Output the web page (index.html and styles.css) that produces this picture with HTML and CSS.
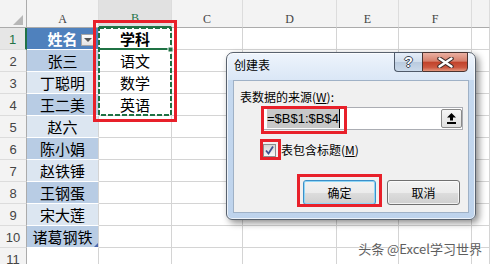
FILE: index.html
```html
<!DOCTYPE html>
<html lang="zh-CN">
<head>
    <meta charset="UTF-8">
    <title>创建表</title>
    <link rel="stylesheet" href="styles.css">
</head>
<body>
    <div class="sheet">
        <div class="hd corner"><span class="tri"></span></div>
        <div class="hd">A</div>
        <div class="hd sel">B</div>
        <div class="hd">C</div>
        <div class="hd">D</div>
        <div class="hd">E</div>
        <div class="hd">F</div>
        <div class="hd"></div>

        <div class="rh sel">1</div>
        <div class="a th">姓名<span class="filter"><i></i></span></div>
        <div class="b bold">学科</div>
        <div></div><div></div><div></div><div></div><div></div>

        <div class="rh">2</div>
        <div class="a even">张三</div>
        <div class="b">语文</div>
        <div></div><div></div><div></div><div></div><div></div>

        <div class="rh">3</div>
        <div class="a odd">丁聪明</div>
        <div class="b">数学</div>
        <div></div><div></div><div></div><div></div><div></div>

        <div class="rh">4</div>
        <div class="a even">王二美</div>
        <div class="b">英语</div>
        <div></div><div></div><div></div><div></div><div></div>

        <div class="rh">5</div>
        <div class="a odd">赵六</div>
        <div></div><div></div><div></div><div></div><div></div><div></div>

        <div class="rh">6</div>
        <div class="a even">陈小娟</div>
        <div></div><div></div><div></div><div></div><div></div><div></div>

        <div class="rh">7</div>
        <div class="a odd">赵铁锤</div>
        <div></div><div></div><div></div><div></div><div></div><div></div>

        <div class="rh">8</div>
        <div class="a even">王钢蛋</div>
        <div></div><div></div><div></div><div></div><div></div><div></div>

        <div class="rh">9</div>
        <div class="a odd">宋大莲</div>
        <div></div><div></div><div></div><div></div><div></div><div></div>

        <div class="rh">10</div>
        <div class="a even last">诸葛钢铁<span class="resize"></span></div>
        <div></div><div></div><div></div><div></div><div></div><div></div>

        <div class="rh">11</div>
        <div></div><div></div><div></div><div></div><div></div><div></div><div></div>
    </div>

    <!-- copy range B1:B4 -->
    <svg class="ants" width="80" height="92" viewBox="0 0 80 92">
        <rect x="1" y="1" width="72" height="87" fill="none" stroke="#1f7244" stroke-width="2" stroke-dasharray="5 2"/>
        <line x1="1" y1="22" x2="72" y2="22" stroke="#1f7244" stroke-width="2"/>
        <rect x="70" y="20" width="5" height="5" fill="#1f7244" stroke="#fff" stroke-width="1"/>
    </svg>

    <div class="dlg">
        <div class="titlebar">
            <span class="title">创建表</span>
            <div class="caption-btns">
                <span class="help">?</span>
                <span class="close">
                    <svg width="17" height="11" viewBox="0 0 17 11">
                        <path d="M2.5 1.5 L14.5 9.5 M14.5 1.5 L2.5 9.5" stroke="#3b2a28" stroke-width="4.4" stroke-linecap="round"/>
                        <path d="M2.5 1.5 L14.5 9.5 M14.5 1.5 L2.5 9.5" stroke="#fff" stroke-width="2.4" stroke-linecap="round"/>
                    </svg>
                </span>
            </div>
        </div>
        <div class="client">
            <div class="label">表数据的来源(<u>W</u>):</div>
            <div class="refedit">
                <span class="selected">=$B$1:$B$4</span>
                <span class="collapse">
                    <svg width="9" height="11" viewBox="0 0 9 11">
                        <polygon points="4.5,0 9,4.5 6,4.5 6,7.5 3,7.5 3,4.5 0,4.5" fill="#000"/>
                        <rect x="0" y="9" width="9" height="2" fill="#000"/>
                    </svg>
                </span>
            </div>
            <div class="check-row">
                <span class="checkbox">
                    <svg width="11" height="11" viewBox="0 0 11 11">
                        <path d="M2 5.5 L4.5 8.5 L9 1.5" fill="none" stroke="#3d5291" stroke-width="1.8"/>
                    </svg>
                </span>
                <span class="label">表包含标题(<u>M</u>)</span>
            </div>
            <div class="btn-row">
                <span class="button default">确定</span>
                <span class="button">取消</span>
            </div>
        </div>
    </div>

    <div class="mark mark-range"></div>
    <div class="mark mark-input"></div>
    <div class="mark mark-check"></div>
    <div class="mark mark-ok"></div>

    <div class="watermark">头条 @Excel学习世界</div>
</body>
</html>
```

FILE: styles.css
```css
* {
    box-sizing: border-box;
}
body {
    margin: 0;
    width: 490px;
    height: 264px;
    overflow: hidden;
    position: relative;
    background: #fff;
    font-family: "Noto Sans CJK SC", sans-serif;
}

/* worksheet grid */
.sheet {
    display: grid;
    grid-template-columns: 27px 72px 73px 71px 94px 62px 73px 1fr;
    grid-template-rows: 28px repeat(11, 22px);
}
.sheet > div {
    position: relative;
    display: flex;
    align-items: center;
    justify-content: center;
    border-right: 1px solid #d4d4d4;
    border-bottom: 1px solid #d4d4d4;
    font-size: 15px;
    line-height: 18px;
    color: #000;
}
.sheet .hd {
    align-items: flex-end;
    padding-bottom: 2px;
    background: #f3f3f3;
    border-right-color: #dcdcdc;
    border-bottom-color: #ababab;
    font-family: "Liberation Serif", serif;
    font-size: 12px;
    line-height: 12px;
    color: #444;
}
.sheet .hd.sel {
    background: #e1e1e1;
    color: #217346;
    border-bottom: 2px solid #217346;
}
.sheet .corner {
    justify-content: flex-end;
    padding: 0 3px 2px 0;
    border-right-color: #ababab;
}
.tri {
    width: 0;
    height: 0;
    border-left: 10px solid transparent;
    border-bottom: 10px solid #b7b7b7;
}
.sheet .rh {
    padding-top: 3px;
    background: #f3f3f3;
    border-right-color: #ababab;
    border-bottom-color: #dcdcdc;
    font-family: "Liberation Sans", sans-serif;
    font-size: 13px;
    color: #444;
}
.sheet .rh.sel {
    background: #e6e6e6;
    color: #217346;
    border-right: 2px solid #217346;
}
.sheet .a {
    border-bottom-color: #fff;
}
.sheet .a.th {
    background: #4f81bd;
    color: #fff;
    font-weight: bold;
}
.sheet .a.even {
    background: #b8cce4;
}
.sheet .a.odd {
    background: #dce6f1;
}
.sheet .bold {
    font-weight: bold;
}
.filter {
    position: absolute;
    right: 4px;
    top: 6px;
    width: 13px;
    height: 12px;
    border: 1px solid #a6a6a6;
    background: linear-gradient(#fbfbfb, #e4e4e4);
    display: flex;
    align-items: center;
    justify-content: center;
}
.filter i {
    width: 0;
    height: 0;
    border-left: 4px solid transparent;
    border-right: 4px solid transparent;
    border-top: 4px solid #555;
}
.resize {
    position: absolute;
    right: 0;
    bottom: 0;
    width: 0;
    height: 0;
    border-left: 4px solid transparent;
    border-bottom: 4px solid #4a66ad;
}
.ants {
    position: absolute;
    left: 98px;
    top: 27px;
    overflow: visible;
}

/* dialog */
.dlg {
    position: absolute;
    left: 226px;
    top: 52px;
    width: 250px;
    height: 168px;
    display: flex;
    flex-direction: column;
    padding: 0 6px 6px 6px;
    border: 1px solid #59626e;
    border-radius: 7px 7px 6px 6px;
    background: linear-gradient(#eef4fc 0, #dae7f6 27px, #c6d9ef 27px, #bed3ec 100%);
    box-shadow: 3px 3px 7px rgba(0,0,0,0.45), inset 0 0 0 1px rgba(255,255,255,0.7);
}
.titlebar {
    height: 27px;
    display: flex;
    align-items: flex-start;
}
.title {
    margin-top: 4px;
    margin-left: 1px;
    font-size: 12px;
    line-height: 16px;
    color: #000;
}
.caption-btns {
    display: flex;
    margin-left: auto;
    margin-right: 1px;
    margin-top: -1px;
}
.help {
    width: 28px;
    height: 20px;
    border: 1px solid #4f5a6a;
    border-right: none;
    border-radius: 0 0 0 4px;
    background: linear-gradient(#e6eef8 0%, #d0ddec 50%, #b9cade 50%, #cad9ea 100%);
    font-family: "Liberation Sans", sans-serif;
    font-weight: bold;
    font-size: 14px;
    line-height: 18px;
    text-align: center;
    color: #fff;
    text-shadow: 1px 0 0 #3c4654, -1px 0 0 #3c4654, 0 1px 0 #3c4654, 0 -1px 0 #3c4654;
}
.close {
    width: 46px;
    height: 20px;
    display: flex;
    align-items: center;
    justify-content: center;
    border: 1px solid #4a3431;
    border-radius: 0 0 4px 0;
    background: linear-gradient(#eab0a2 0%, #d6806c 45%, #c2432b 52%, #cc5840 80%, #e3967d 100%);
}
.client {
    flex: 1;
    background: #f0f0f0;
    border: 1px solid #9fb1c6;
    font-size: 12px;
    line-height: 14px;
    color: #000;
}
.client .label {
    margin: 9px 0 0 6px;
}
.client u {
    text-decoration-thickness: 1px;
    text-underline-offset: 1px;
}
.refedit {
    display: flex;
    align-items: center;
    width: 201px;
    height: 23px;
    margin: 3px 0 0 28px;
    padding-left: 4px;
    border: 1px solid #abadb3;
    background: #fff;
}
.selected {
    background: #c8c8c8;
    border-right: 1px solid #000;
    font-family: "Liberation Sans", sans-serif;
    font-size: 13px;
    line-height: 19px;
}
.collapse {
    margin-left: auto;
    margin-right: 0;
    width: 21px;
    height: 19px;
    display: flex;
    align-items: center;
    justify-content: center;
    border: 1px solid #8a8a8a;
    border-radius: 2px;
    background: linear-gradient(#f6f6f6, #e0e0e0);
}
.check-row {
    display: flex;
    align-items: center;
    margin: 13px 0 0 29px;
}
.check-row .label {
    margin: 0 0 0 5px;
}
.checkbox {
    width: 13px;
    height: 13px;
    display: flex;
    align-items: center;
    justify-content: center;
    border: 1px solid #8e8f8f;
    background: linear-gradient(#d6d6d6, #f8f8f8);
}
.btn-row {
    display: flex;
    gap: 11px;
    margin: 23px 0 0 69px;
}
.button {
    width: 73px;
    height: 25px;
    display: flex;
    align-items: center;
    justify-content: center;
    border: 1px solid #707070;
    border-radius: 3px;
    background: linear-gradient(#f2f2f2 0%, #ebebeb 50%, #dddddd 50%, #cfcfcf 100%);
    box-shadow: inset 0 0 0 1px rgba(255,255,255,0.7);
}
.button.default {
    border-color: #3c8fc8;
    box-shadow: inset 0 0 0 1px #8fd6f6;
}

/* red highlight boxes */
.mark {
    position: absolute;
    border: 3px solid #e8202a;
}
.mark-range {
    left: 93px;
    top: 20px;
    width: 84px;
    height: 102px;
}
.mark-input {
    left: 261px;
    top: 106px;
    width: 86px;
    height: 28px;
}
.mark-check {
    left: 260px;
    top: 139px;
    width: 21px;
    height: 21px;
}
.mark-ok {
    left: 297px;
    top: 174px;
    width: 85px;
    height: 33px;
}
.watermark {
    position: absolute;
    right: 8px;
    top: 241px;
    font-size: 13px;
    line-height: 16px;
    color: #5e5e5e;
    text-shadow: 0 0 2px #fff, 0 0 1px #fff;
}
```
